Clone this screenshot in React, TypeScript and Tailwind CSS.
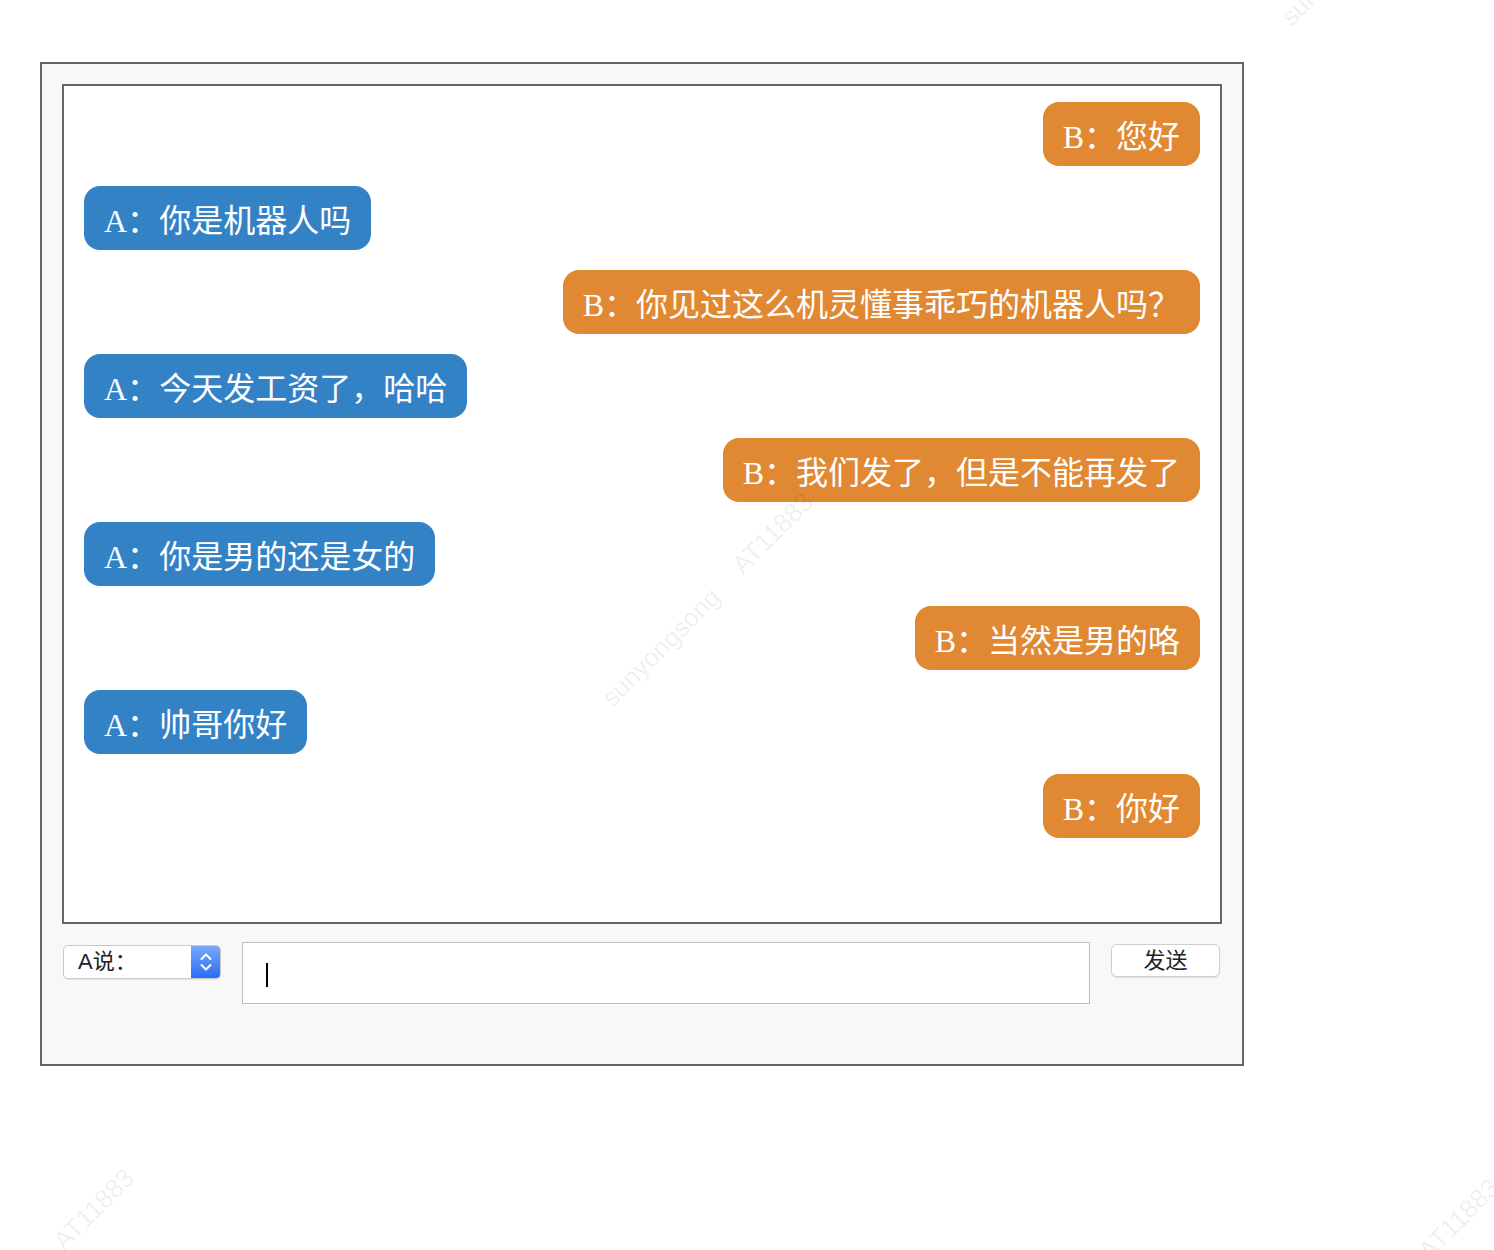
import React from 'react';

type Msg = { from: 'A' | 'B'; text: string };

const messages: Msg[] = [
  { from: 'B', text: '您好' },
  { from: 'A', text: '你是机器人吗' },
  { from: 'B', text: '你见过这么机灵懂事乖巧的机器人吗？' },
  { from: 'A', text: '今天发工资了，哈哈' },
  { from: 'B', text: '我们发了，但是不能再发了' },
  { from: 'A', text: '你是男的还是女的' },
  { from: 'B', text: '当然是男的咯' },
  { from: 'A', text: '帅哥你好' },
  { from: 'B', text: '你好' },
];

const serif = { fontFamily: '"Liberation Serif", "Noto Sans CJK SC", serif' };
const sans = { fontFamily: '"Liberation Sans", "Noto Sans CJK SC", sans-serif' };

const Bubble: React.FC<{ msg: Msg }> = ({ msg }) => (
  <div
    className={`h-16 px-5 pt-[6px] rounded-2xl text-white text-[32px] leading-[58px] whitespace-nowrap ${
      msg.from === 'A' ? 'self-start bg-[#3482c6]' : 'self-end bg-[#e18833]'
    }`}
    style={serif}
  >
    {msg.from}：{msg.text}
  </div>
);

const Watermark: React.FC<{ text: string; className: string }> = ({ text, className }) => (
  <div
    className={`absolute pointer-events-none select-none text-[26px] text-black/[0.07] -rotate-45 whitespace-nowrap ${className}`}
    style={sans}
  >
    {text}
  </div>
);

export default function App() {
  return (
    <div className="relative w-full h-[1250px] overflow-hidden bg-white">
      <div className="ml-10 pt-[62px]">
        <div className="w-[1204px] h-[1004px] border-2 border-[#666] bg-[#f8f8f8] p-5">
          <div className="h-[840px] border-2 border-[#666] bg-white pt-4 px-5 flex flex-col gap-5">
            {messages.map((m, i) => (
              <Bubble key={i} msg={m} />
            ))}
          </div>

          <div className="mt-[18px] pl-px flex items-start" style={sans}>
            <div className="mt-[3px] w-[158px] h-[34px] flex rounded-[5px] border border-[#c9c9c9] bg-white shadow-[0_1px_1px_rgba(0,0,0,0.08)] overflow-hidden">
              <div className="flex-1 pl-[14px] text-[22px] leading-[32px] text-[#222]">A说：</div>
              <div className="w-[29px] h-full bg-gradient-to-b from-[#79a8fa] to-[#2a6cf3] flex items-center justify-center">
                <svg width="14" height="24" viewBox="0 0 14 24" fill="none" stroke="white" strokeWidth="2" strokeLinecap="round" strokeLinejoin="round">
                  <path d="M2.5 9 L7 4.5 L11.5 9" />
                  <path d="M2.5 15 L7 19.5 L11.5 15" />
                </svg>
              </div>
            </div>

            <div className="ml-[21px] w-[848px] h-[62px] border border-[#bdbdbd] bg-white pl-[23px] pt-[20px]">
              <div className="w-[2px] h-[24px] bg-black" />
            </div>

            <button
              className="ml-[21px] mt-[2px] w-[109px] h-[33px] rounded-[6px] border border-[#cfcfcf] bg-white text-[22px] leading-[30px] text-[#222] shadow-[0_1px_1px_rgba(0,0,0,0.1)]"
              style={sans}
            >
              发送
            </button>
          </div>
        </div>
      </div>

      <Watermark text="AT11883" className="left-[722px] top-[514px]" />
      <Watermark text="sunyongsong" className="left-[584px] top-[628px]" />
      <Watermark text="sunyongsong" className="left-[1263px] top-[-53px]" />
      <Watermark text="AT11883" className="left-[43px] top-[1190px]" />
      <Watermark text="AT11883" className="left-[1408px] top-[1200px]" />
    </div>
  );
}
